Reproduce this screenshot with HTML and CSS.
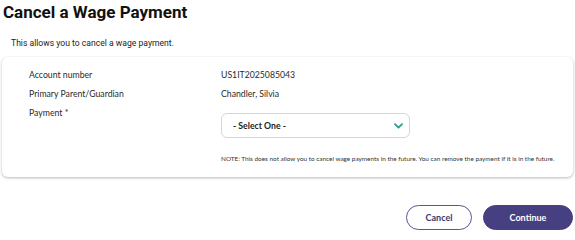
FILE: index.html
```html
<!DOCTYPE html>
<html lang="en">
<head>
  <meta charset="UTF-8">
  <title>Cancel a Wage Payment</title>
  <link rel="stylesheet" href="styles.css">
</head>
<body>
<main class="page">
  <h1 class="page-title">Cancel a Wage Payment</h1>
  <p class="page-intro">This allows you to cancel a wage payment.</p>
  <section class="card">
    <div class="field-label">Account number</div>
    <div class="field-value">US1IT2025085043</div>
    <div class="field-label">Primary Parent/Guardian</div>
    <div class="field-value">Chandler, Silvia</div>
    <div class="field-label">Payment *</div>
    <div class="field-value">
      <div class="select">
        <span class="select-text">- Select One -</span>
        <svg class="select-icon" width="9" height="6" viewBox="0 0 9 6">
          <path d="M1 1.2 L4.5 4.6 L8 1.2" fill="none" stroke="#2f9c8c" stroke-width="1.8" stroke-linecap="round" stroke-linejoin="round"/>
        </svg>
      </div>
      <p class="note">NOTE: This does not allow you to cancel wage payments in the future. You can remove the payment if it is in the future.</p>
    </div>
  </section>
  <div class="actions">
    <button class="btn btn-outline">Cancel</button>
    <button class="btn btn-primary">Continue</button>
  </div>
</main>
</body>
</html>
```

FILE: styles.css
```css
body {
  margin: 0;
  background: #fff;
  color: #222;
  font-family: Lato, "Noto Sans", sans-serif;
}
.page {
  padding: 0 2px;
}
.page-title {
  margin: 0;
  padding: 1px 0 0 1px;
  font-family: Roboto, "Liberation Sans", sans-serif;
  font-size: 17px;
  line-height: 23px;
  font-weight: 700;
  color: #111;
}
.page-intro {
  margin: 13px 0 0 9px;
  font-size: 8.6px;
  line-height: 12px;
  font-family: Roboto, "Liberation Sans", sans-serif;
}
.card {
  margin-top: 8px;
  display: grid;
  grid-template-columns: 192px 1fr;
  padding: 8px 15px 13px 27px;
  border-radius: 6px;
  background: #fff;
  box-shadow: 0 1px 3px rgba(0, 0, 0, .28);
  font-size: 8.7px;
  line-height: 19px;
}
.field-label,
.field-value {
  color: #2a2a2a;
}
.select {
  margin-top: 10px;
  width: 189px;
  height: 25px;
  box-sizing: border-box;
  border: 1px solid #d6d6d6;
  border-radius: 6px;
  padding: 0 6px 0 11px;
  display: flex;
  align-items: center;
  justify-content: space-between;
}
.select-text {
  font-weight: 700;
  color: #222;
}
.note {
  margin: 16px 0 0;
  font-size: 6.4px;
  line-height: 10px;
  color: #333;
  white-space: nowrap;
}
.actions {
  margin-top: 28px;
  display: flex;
  justify-content: flex-end;
  gap: 11px;
}
.btn {
  height: 25px;
  border-radius: 13px;
  font-family: Lato, "Noto Sans", sans-serif;
  font-size: 9px;
  font-weight: 700;
  cursor: pointer;
}
.btn-outline {
  width: 66px;
  background: #fff;
  border: 1px solid #5a5394;
  color: #3e3870;
}
.btn-primary {
  width: 90px;
  background: #463f82;
  border: 1px solid #463f82;
  color: #fff;
}
```
